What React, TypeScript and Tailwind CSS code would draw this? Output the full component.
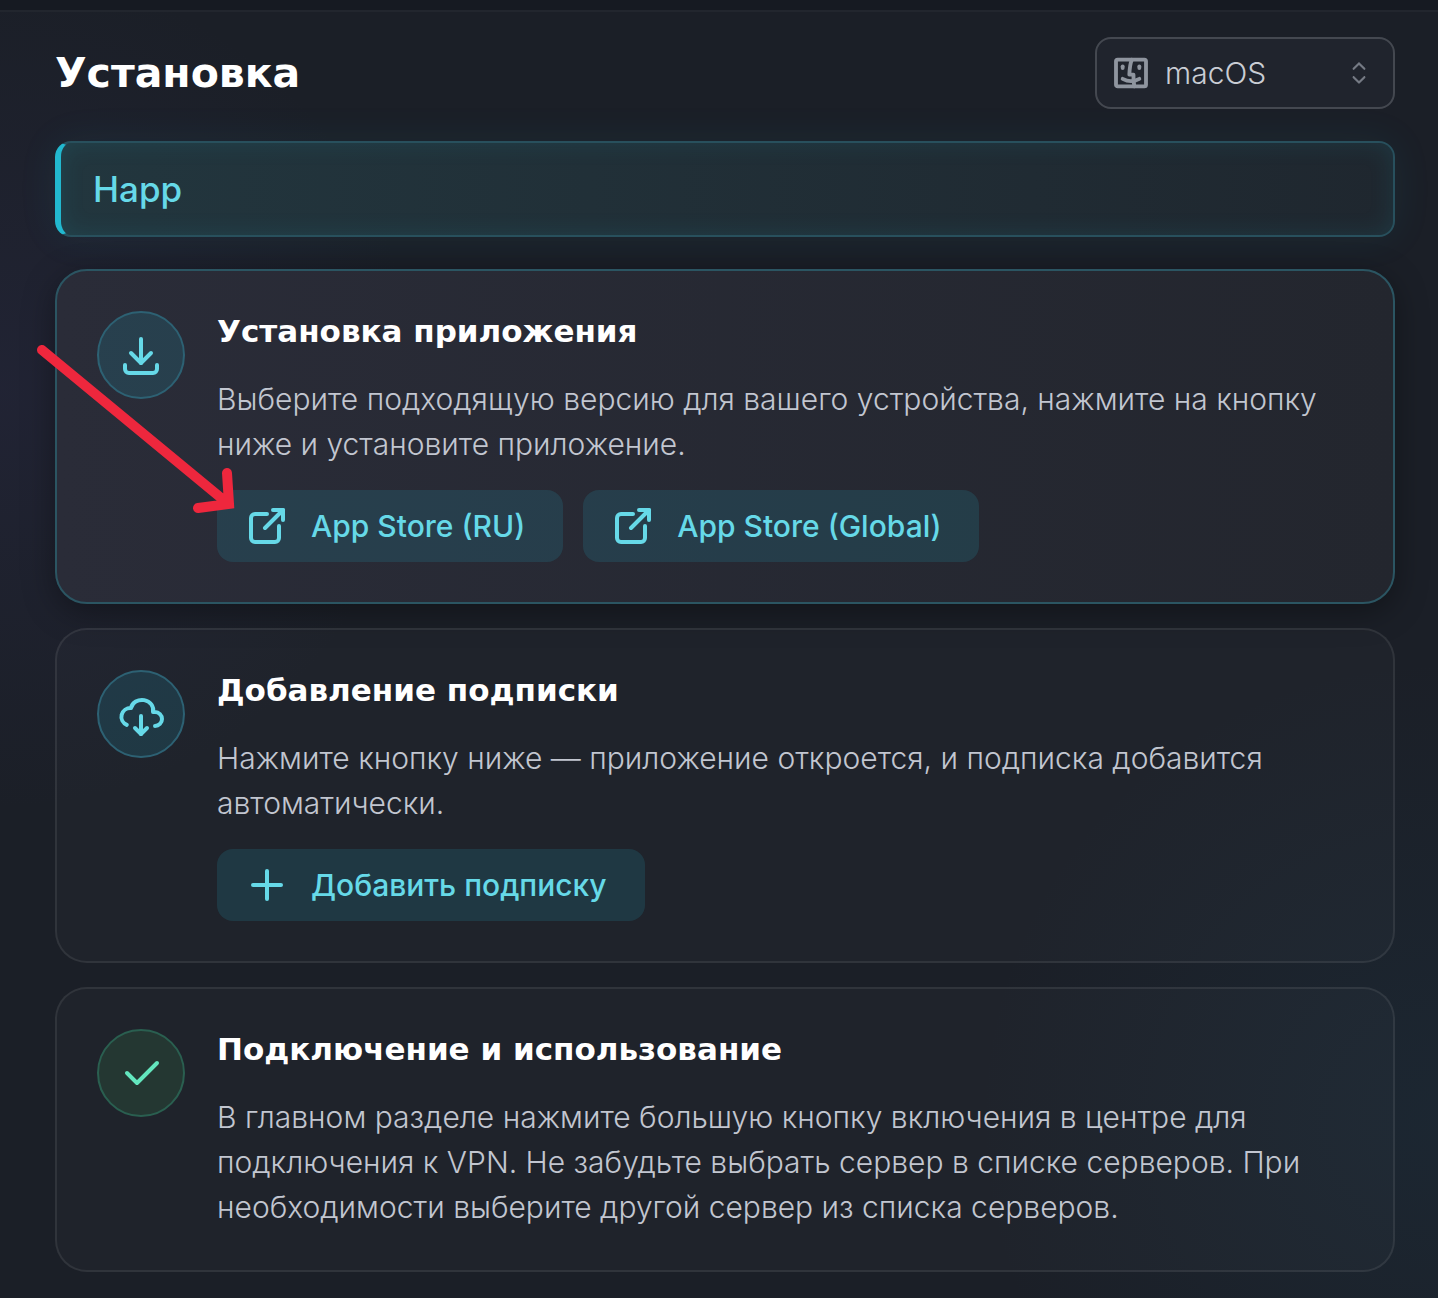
import type { ReactNode } from "react";
import {
  TbBrandFinder,
  TbCheck,
  TbCloudDownload,
  TbDownload,
  TbExternalLink,
  TbPlus,
} from "react-icons/tb";

function SelectorIcon() {
  return (
    <svg viewBox="0 0 15 15" fill="currentColor" className="size-9" aria-hidden="true">
      <path
        fillRule="evenodd"
        clipRule="evenodd"
        d="M4.93179 5.43179C4.75605 5.60753 4.75605 5.89245 4.93179 6.06819C5.10753 6.24392 5.39245 6.24392 5.56819 6.06819L7.49999 4.13638L9.43179 6.06819C9.60753 6.24392 9.89245 6.24392 10.0682 6.06819C10.2439 5.89245 10.2439 5.60753 10.0682 5.43179L7.81819 3.18179C7.73379 3.0974 7.61933 3.04999 7.49999 3.04999C7.38064 3.04999 7.26618 3.0974 7.18179 3.18179L4.93179 5.43179ZM10.0682 9.56819C10.2439 9.39245 10.2439 9.10753 10.0682 8.93179C9.89245 8.75606 9.60753 8.75606 9.43179 8.93179L7.49999 10.8636L5.56819 8.93179C5.39245 8.75606 5.10753 8.75606 4.93179 8.93179C4.75605 9.10753 4.75605 9.39245 4.93179 9.56819L7.18179 11.8182C7.26618 11.9026 7.38064 11.95 7.49999 11.95C7.61933 11.95 7.73379 11.9026 7.81819 11.8182L10.0682 9.56819Z"
      />
    </svg>
  );
}

function PlatformSelect() {
  return (
    <div className="relative w-[300px]">
      <TbBrandFinder
        strokeWidth={2.3}
        className="pointer-events-none absolute top-4 left-4 size-10 text-[#8f959f]"
      />
      <select
        aria-label="Платформа"
        defaultValue="macos"
        className="h-[72px] w-full appearance-none rounded-2xl border-2 border-[#444850] bg-[#20242d] pr-14 pl-[68px] text-[30px] font-light text-[#c9cdd4]"
      >
        <option value="macos">macOS</option>
      </select>
      <span className="pointer-events-none absolute top-[18px] right-[18px] text-[#757a84]">
        <SelectorIcon />
      </span>
    </div>
  );
}

function StepCard({
  icon,
  title,
  text,
  tone = "cyan",
  active = false,
  children,
}: {
  icon: ReactNode;
  title: string;
  text: string;
  tone?: "cyan" | "green";
  active?: boolean;
  children?: ReactNode;
}) {
  const surface = active
    ? "border-[#2b5562] bg-linear-to-r from-[#2a2c38] to-[#23262e] shadow-[0_8px_32px_rgba(0,0,0,0.35)]"
    : "border-white/8 bg-white/2";
  const badge =
    tone === "cyan"
      ? "border-[#2d6173] bg-[#22b8cf]/15 text-[#66d9e8]"
      : "border-[#2a5f50] bg-[#243732] text-[#63e6be]";
  return (
    <section className={`flex gap-8 rounded-[32px] border-2 p-10 ${surface}`}>
      <div className={`flex size-[88px] shrink-0 items-center justify-center rounded-full border-2 ${badge}`}>
        {icon}
      </div>
      <div className="min-w-0 flex-1">
        <h2 className="font-['DejaVu_Sans',sans-serif] text-[31px] leading-10 font-bold text-white">{title}</h2>
        <p className="mt-[26px] text-[30px] leading-[45px] font-light text-[#c2c6d0]">{text}</p>
        {children && <div className="mt-[23px] flex flex-wrap gap-5">{children}</div>}
      </div>
    </section>
  );
}

const actionClass =
  "flex h-[72px] items-center gap-5 rounded-2xl bg-[#22b8cf]/15 pr-[38px] pl-[26px] text-[30px] font-medium text-[#66d9e8]";

function StoreLink({ children }: { children: ReactNode }) {
  return (
    <a href="#" className={actionClass}>
      <TbExternalLink className="size-12" />
      {children}
    </a>
  );
}

function PointerArrow() {
  return (
    <svg
      viewBox="0 0 204 170"
      className="pointer-events-none absolute top-[345px] left-[36px] w-[204px]"
      fill="none"
      stroke="#ee273d"
      strokeWidth="10"
      strokeLinecap="round"
      aria-hidden="true"
    >
      <path d="M6 5L190 157M191 128L193 159L162 163" />
    </svg>
  );
}

export default function App() {
  return (
    <div className="relative min-h-screen overflow-hidden bg-[#1b1f27] bg-[radial-gradient(circle_at_0px_390px,rgba(60,55,110,0.18),transparent_420px),radial-gradient(circle_at_100%_1120px,rgba(34,90,120,0.13),transparent_460px)] font-['Inter',sans-serif]">
      <div className="h-3 border-b-2 border-[#22262e] bg-[#161a22]" />
      <main className="pt-[25px] pr-[43px] pb-[26px] pl-[55px]">
        <header className="flex items-center justify-between">
          <h1 className="font-['DejaVu_Sans',sans-serif] text-[41px] leading-[72px] font-bold text-white">Установка</h1>
          <PlatformSelect />
        </header>

        <button
          type="button"
          className="mt-8 block h-24 w-full rounded-2xl border-2 border-l-6 border-[#28505d] border-l-[#22b8cf] bg-linear-to-r from-[#22363e] to-[#1f272f] pl-8 text-left text-[35px] font-medium text-[#66d9e8] shadow-[0_0_40px_rgba(34,184,207,0.08),inset_0_0_24px_rgba(34,184,207,0.12)]"
        >
          Happ
        </button>

        <div className="mt-8 flex flex-col gap-6">
          <StepCard
            active
            icon={<TbDownload className="size-12" />}
            title="Установка приложения"
            text="Выберите подходящую версию для вашего устройства, нажмите на кнопку ниже и установите приложение."
          >
            <StoreLink>App Store (RU)</StoreLink>
            <StoreLink>App Store (Global)</StoreLink>
          </StepCard>
          <StepCard
            icon={<TbCloudDownload className="size-12" />}
            title="Добавление подписки"
            text="Нажмите кнопку ниже — приложение откроется, и подписка добавится автоматически."
          >
            <button type="button" className={actionClass}>
              <TbPlus className="size-12" />
              Добавить подписку
            </button>
          </StepCard>
          <StepCard
            tone="green"
            icon={<TbCheck className="size-12" />}
            title="Подключение и использование"
            text="В главном разделе нажмите большую кнопку включения в центре для подключения к VPN. Не забудьте выбрать сервер в списке серверов. При необходимости выберите другой сервер из списка серверов."
          />
        </div>
      </main>
      <PointerArrow />
    </div>
  );
}
